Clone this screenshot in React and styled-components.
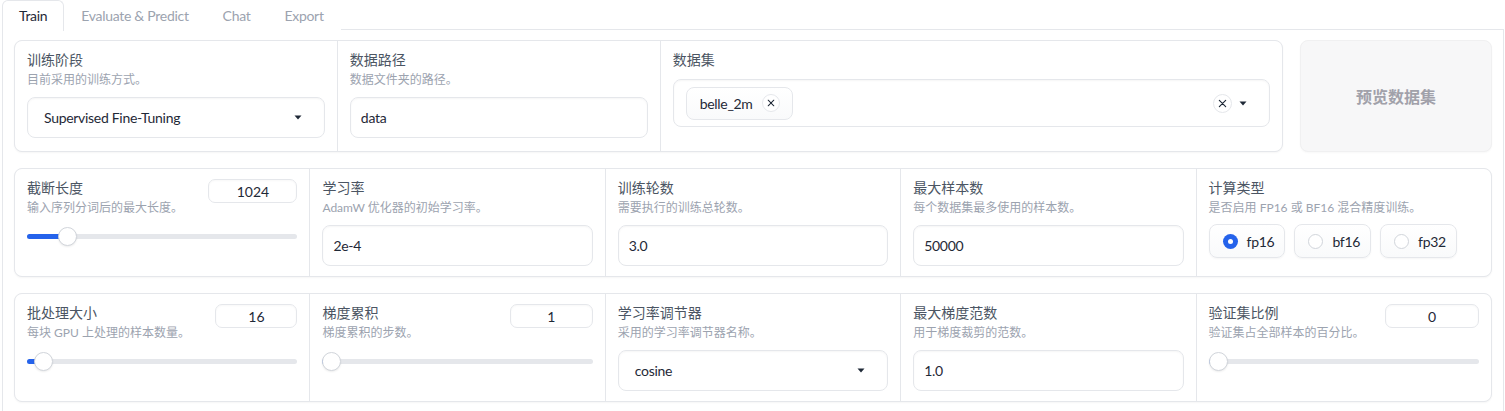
import React from "react";
import styled, { createGlobalStyle } from "styled-components";

const GlobalStyle = createGlobalStyle`
  html, body { margin: 0; padding: 0; background: #ffffff; }
  body {
    font-family: "Lato", "Noto Sans CJK SC", sans-serif;
    color: #1f2937;
    -webkit-font-smoothing: antialiased;
  }
  * { box-sizing: border-box; }
`;

const Latin = `letter-spacing: -0.3px;`;

const Page = styled.div`
  padding: 0 1px 0 2px;
  width: 1505px;
`;

const TabBar = styled.div`
  display: flex;
  height: 30px;
  border-bottom: 1px solid #e5e7eb;
`;

const Tab = styled.div`
  height: 31px;
  padding: 0 16px 2px 16px;
  display: flex;
  align-items: center;
  font-size: 14px;
  ${Latin}
  color: ${(p) => (p.$active ? "#1f2937" : "#9ca3af")};
  background: #fff;
  border: 1px solid ${(p) => (p.$active ? "#e5e7eb" : "transparent")};
  border-bottom: none;
  border-radius: 6px 6px 0 0;
  margin-bottom: -1px;
  position: relative;
`;

const Panel = styled.div`
  border: 1px solid #e5e7eb;
  border-top: none;
  padding: 10px 11px 20px 11px;
  display: flex;
  flex-direction: column;
  gap: 16px;
`;

const TopRow = styled.div`
  display: grid;
  grid-template-columns: 1268fr 192fr;
  gap: 17px;
`;

const Group = styled.div`
  display: grid;
  grid-template-columns: ${(p) => p.$cols};
  gap: 1px;
  background: #e5e7eb;
  border: 1px solid #e5e7eb;
  border-radius: 8px;
  overflow: hidden;
  box-shadow: 0 1px 2px rgba(0, 0, 0, 0.04);
`;

const Block = styled.div`
  background: #fff;
  padding: 10px 12px ${(p) => p.$pb || 10}px 12px;
  display: flex;
  flex-direction: column;
  min-width: 0;
`;

const Label = styled.div`
  font-size: 14px;
  line-height: 18px;
  color: #4b5563;
  white-space: nowrap;
`;

const Info = styled.div`
  font-size: 12px;
  line-height: 18px;
  margin-top: 2px;
  color: #9ca3af;
  white-space: nowrap;
`;

const TextInput = styled.input`
  margin-top: 8px;
  height: 41px;
  width: 100%;
  border: 1px solid #e5e7eb;
  border-radius: 8px;
  padding: 0 10px;
  font: inherit;
  font-size: 14px;
  ${Latin}
  color: #1f2937;
  background: #fff;
  box-shadow: inset 0 1px 2px rgba(0, 0, 0, 0.04);
  outline: none;
`;

const SelectBox = styled.div`
  margin-top: 8px;
  height: 41px;
  border: 1px solid #e5e7eb;
  border-radius: 8px;
  padding: 0 22px 0 16px;
  display: flex;
  align-items: center;
  justify-content: space-between;
  font-size: 14px;
  ${Latin}
  color: #1f2937;
  box-shadow: inset 0 1px 2px rgba(0, 0, 0, 0.04);
`;

const Caret = () => (
  <svg width="8" height="5" viewBox="0 0 8 5">
    <path d="M0.5 0.5 L7.5 0.5 L4 4.5 Z" fill="#1f2937" />
  </svg>
);

const MultiBox = styled.div`
  margin-top: 10px;
  height: 48px;
  border: 1px solid #e5e7eb;
  border-radius: 8px;
  padding: 0 22px 0 12px;
  display: flex;
  align-items: center;
  box-shadow: inset 0 1px 2px rgba(0, 0, 0, 0.04);
`;

const Chip = styled.div`
  height: 33px;
  padding: 0 12px 0 13px;
  display: flex;
  align-items: center;
  gap: 9px;
  border: 1px solid #e5e7eb;
  border-radius: 8px;
  background: linear-gradient(#ffffff, #f9fafb);
  font-size: 14px;
  ${Latin}
  color: #1f2937;
`;

const CircleX = styled.span`
  width: ${(p) => p.$size}px;
  height: ${(p) => p.$size}px;
  border-radius: 50%;
  border: 1px solid #e5e7eb;
  background: #fff;
  display: inline-flex;
  align-items: center;
  justify-content: center;
`;

const XIcon = ({ s = 8 }) => (
  <svg width={s} height={s} viewBox="0 0 10 10">
    <path d="M1.5 1.5 L8.5 8.5 M8.5 1.5 L1.5 8.5" stroke="#1f2937" strokeWidth="1.3" strokeLinecap="round" />
  </svg>
);

const Spacer = styled.div`
  flex: 1;
`;

const MultiRight = styled.div`
  display: flex;
  align-items: center;
  gap: 7px;
`;

const PreviewButton = styled.button`
  border: 1px solid #f0f0f1;
  border-radius: 8px;
  background: #f7f7f8;
  color: #a1a1aa;
  font: inherit;
  font-size: 16px;
  font-weight: 700;
  box-shadow: 0 1px 2px rgba(0, 0, 0, 0.03);
`;

const SliderHeader = styled.div`
  display: flex;
  justify-content: space-between;
  align-items: flex-start;
`;

const NumberBox = styled.input`
  width: ${(p) => p.$w}px;
  height: 24px;
  border: 1px solid #e5e7eb;
  border-radius: 7px;
  text-align: center;
  font: inherit;
  font-size: 14px;
  color: #1f2937;
  background: #fff;
  padding: 0;
  outline: none;
  box-shadow: inset 0 1px 2px rgba(0, 0, 0, 0.03);
`;

const SliderWrap = styled.div`
  margin-top: 9px;
  height: 20px;
  position: relative;
  display: flex;
  align-items: center;
`;

const Track = styled.div`
  width: 100%;
  height: 5px;
  border-radius: 3px;
  background: #e5e7eb;
  overflow: hidden;
`;

const Fill = styled.div`
  height: 100%;
  background: #2563eb;
`;

const Thumb = styled.div`
  position: absolute;
  top: 0.5px;
  width: 19px;
  height: 19px;
  margin-left: -9.5px;
  border-radius: 50%;
  background: #fff;
  border: 1px solid #d1d5db;
  box-shadow: 0 1px 2px rgba(0, 0, 0, 0.08);
`;

const RadioRow = styled.div`
  margin-top: 7px;
  display: flex;
  gap: 9px;
`;

const RadioOption = styled.div`
  height: 34px;
  padding: 0 10px 0 13px;
  display: flex;
  align-items: center;
  gap: 9px;
  border: 1px solid #e5e7eb;
  border-radius: 8px;
  background: linear-gradient(#ffffff, #f9fafb);
  box-shadow: 0 1px 2px rgba(0, 0, 0, 0.04);
  font-size: 14px;
  ${Latin}
  color: #1f2937;
`;

const RadioDot = styled.span`
  width: 15px;
  height: 15px;
  border-radius: 50%;
  box-sizing: border-box;
  background: ${(p) => (p.$on ? "#2563eb" : "#fff")};
  border: ${(p) => (p.$on ? "none" : "1px solid #d1d5db")};
  display: inline-flex;
  align-items: center;
  justify-content: center;
  &::after {
    content: "";
    display: ${(p) => (p.$on ? "block" : "none")};
    width: 5px;
    height: 5px;
    border-radius: 50%;
    background: #fff;
  }
`;

function Slider({ label, info, value, w, p }) {
  const pct = `calc(9.5px + (100% - 19px) * ${p})`;
  return (
    <Block>
      <SliderHeader>
        <div>
          <Label>{label}</Label>
          <Info>{info}</Info>
        </div>
        <NumberBox $w={w} readOnly value={value} />
      </SliderHeader>
      <SliderWrap>
        <Track>
          <Fill style={{ width: pct }} />
        </Track>
        <Thumb style={{ left: pct }} />
      </SliderWrap>
    </Block>
  );
}

function Field({ label, info, value, pb }) {
  return (
    <Block $pb={pb}>
      <Label>{label}</Label>
      <Info>{info}</Info>
      <TextInput readOnly value={value} />
    </Block>
  );
}

function Select({ label, info, value, pb }) {
  return (
    <Block $pb={pb}>
      <Label>{label}</Label>
      <Info>{info}</Info>
      <SelectBox>
        <span>{value}</span>
        <Caret />
      </SelectBox>
    </Block>
  );
}

export default function App() {
  return (
    <Page>
      <GlobalStyle />
      <TabBar>
        <Tab $active>Train</Tab>
        <Tab>Evaluate &amp; Predict</Tab>
        <Tab>Chat</Tab>
        <Tab>Export</Tab>
      </TabBar>
      <Panel>
        <TopRow>
          <Group $cols="1fr 1fr 1.93fr">
            <Select label="训练阶段" info="目前采用的训练方式。" value="Supervised Fine-Tuning" pb={13} />
            <Field label="数据路径" info="数据文件夹的路径。" value="data" pb={13} />
            <Block>
              <Label>数据集</Label>
              <MultiBox>
                <Chip>
                  <span>belle_2m</span>
                  <CircleX $size={18}>
                    <XIcon s={8} />
                  </CircleX>
                </Chip>
                <Spacer />
                <MultiRight>
                  <CircleX $size={19}>
                    <XIcon s={9} />
                  </CircleX>
                  <Caret />
                </MultiRight>
              </MultiBox>
            </Block>
          </Group>
          <PreviewButton>预览数据集</PreviewButton>
        </TopRow>

        <Group $cols="repeat(5, 1fr)">
          <Slider label="截断长度" info="输入序列分词后的最大长度。" value="1024" w={89} p={0.1246} />
          <Field label="学习率" info="AdamW 优化器的初始学习率。" value="2e-4" />
          <Field label="训练轮数" info="需要执行的训练总轮数。" value="3.0" />
          <Field label="最大样本数" info="每个数据集最多使用的样本数。" value="50000" />
          <Block>
            <Label>计算类型</Label>
            <Info>是否启用 FP16 或 BF16 混合精度训练。</Info>
            <RadioRow>
              <RadioOption>
                <RadioDot $on />
                fp16
              </RadioOption>
              <RadioOption>
                <RadioDot />
                bf16
              </RadioOption>
              <RadioOption>
                <RadioDot />
                fp32
              </RadioOption>
            </RadioRow>
          </Block>
        </Group>

        <Group $cols="repeat(5, 1fr)">
          <Slider label="批处理大小" info="每块 GPU 上处理的样本数量。" value="16" w={82} p={0.029} />
          <Slider label="梯度累积" info="梯度累积的步数。" value="1" w={83} p={0} />
          <Select label="学习率调节器" info="采用的学习率调节器名称。" value="cosine" />
          <Field label="最大梯度范数" info="用于梯度裁剪的范数。" value="1.0" />
          <Slider label="验证集比例" info="验证集占全部样本的百分比。" value="0" w={94} p={0} />
        </Group>
      </Panel>
    </Page>
  );
}
